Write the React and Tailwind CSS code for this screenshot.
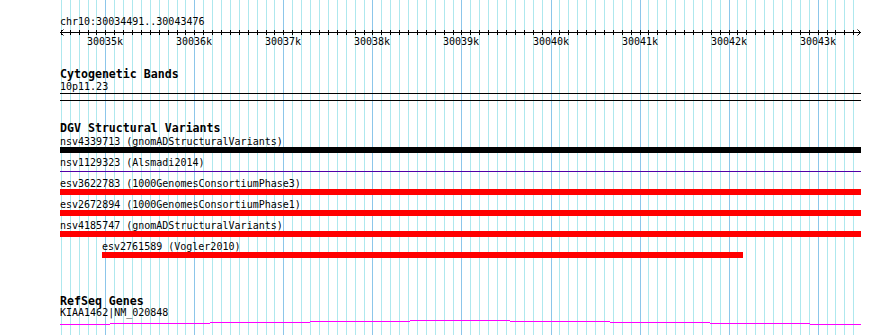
import React from "react";

const START = 30034491;
const END = 30043476;
const LEFT = 60;
const WIDTH = 800;
const xOf = (pos) => LEFT + ((pos - START) * WIDTH) / (END - START);

const gridPositions = [];
for (let p = 30034500; p <= END; p += 100) gridPositions.push(p);

function Grid() {
  return (
    <svg className="absolute left-0 top-0" width="890" height="335" shapeRendering="crispEdges">
      {gridPositions.map((p) => {
        const x = Math.round(xOf(p)) + 0.5;
        const major = p % 1000 === 0;
        return (
          <line key={p} x1={x} x2={x} y1={0} y2={335} stroke={major ? "#8cc6ea" : "#aee8ee"} strokeWidth="1" />
        );
      })}
    </svg>
  );
}

function Ruler() {
  const majors = [];
  for (let k = 35; k <= 43; k++) majors.push(k);
  return (
    <svg width="890" height="20" className="block" shapeRendering="crispEdges">
      <line x1={60} x2={861} y1={5.5} y2={5.5} stroke="#000" />
      <path d="M63.5 2.5 L60.5 5.5 L63.5 8.5" fill="none" stroke="#000" shapeRendering="auto" />
      <path d="M857.5 2.5 L860.5 5.5 L857.5 8.5" fill="none" stroke="#000" shapeRendering="auto" />
      {gridPositions.map((p) => {
        const x = Math.round(xOf(p)) + 0.5;
        return <line key={p} x1={x} x2={x} y1={3} y2={8} stroke="#000" />;
      })}
      {majors.map((k) => (
        <text
          key={k}
          x={Math.round(xOf(30000000 + k * 1000))}
          y={17.5}
          textAnchor="middle"
          fontFamily="'DejaVu Sans Mono', monospace"
          fontSize="10"
          fill="#000"
        >
          {`300${k}k`}
        </text>
      ))}
    </svg>
  );
}

const rows = [
  { label: "nsv4339713 (gnomADStructuralVariants)", kind: "bar", color: "bg-black" },
  { label: "nsv1129323 (Alsmadi2014)", kind: "line" },
  { label: "esv3622783 (1000GenomesConsortiumPhase3)", kind: "bar", color: "bg-[#ff0000]" },
  { label: "esv2672894 (1000GenomesConsortiumPhase1)", kind: "bar", color: "bg-[#ff0000]" },
  { label: "nsv4185747 (gnomADStructuralVariants)", kind: "bar", color: "bg-[#ff0000]" },
  { label: "esv2761589 (Vogler2010)", kind: "partial" },
];

function Row({ row }) {
  if (row.kind === "partial") {
    return (
      <div className="h-[21px] ml-[42px] w-[641px] flex flex-col">
        <div className="h-[10px] leading-[10px] text-[10px] whitespace-pre">{row.label}</div>
        <div className="h-[6px] bg-[#ff0000]" />
      </div>
    );
  }
  return (
    <div className="h-[21px] w-[801px] flex flex-col">
      <div className="h-[10px] leading-[10px] text-[10px] whitespace-pre">{row.label}</div>
      {row.kind === "bar" ? (
        <div className={`h-[6px] ${row.color}`} />
      ) : (
        <div className="h-[6px] flex flex-col justify-center">
          <div className="h-px bg-[#5000a8]" />
        </div>
      )}
    </div>
  );
}

function GeneLine() {
  const segs = [
    [60, 110, 324],
    [110, 210, 323],
    [210, 310, 322],
    [310, 410, 321],
    [410, 510, 320],
    [510, 610, 321],
    [610, 710, 322],
    [710, 810, 323],
    [810, 861, 324],
  ];
  return (
    <svg width="890" height="10" className="block" shapeRendering="crispEdges">
      {segs.map(([a, b, y], i) => (
        <line key={i} x1={a} x2={b} y1={y - 318 + 0.5} y2={y - 318 + 0.5} stroke="#ff00ff" strokeWidth="1" />
      ))}
    </svg>
  );
}

export default function App() {
  return (
    <div
      className="relative w-[890px] h-[335px] overflow-hidden bg-white text-black"
      style={{ fontFamily: "'DejaVu Sans Mono', monospace" }}
    >
      <Grid />
      <div className="relative flex flex-col">
        <div className="pt-[17px] pl-[60px] h-[27px] text-[10px] leading-[10px] whitespace-pre">
          chr10:30034491..30043476
        </div>
        <Ruler />
        <div className="pl-[60px] mt-[21px] h-[12px] text-[11.6px] leading-[12px] font-bold whitespace-pre">
          Cytogenetic Bands
        </div>
        <div className="pl-[60px] mt-[2px] h-[10px] text-[10px] leading-[10px] whitespace-pre">10p11.23</div>
        <div className="pl-[60px] mt-[1px]">
          <div className="w-[801px] h-px bg-black" />
          <div className="w-[801px] h-px bg-black mt-[6px]" />
        </div>
        <div className="pl-[60px] mt-[21px] h-[12px] text-[11.6px] leading-[12px] font-bold whitespace-pre">
          DGV Structural Variants
        </div>
        <div className="pl-[60px] mt-[3px] flex flex-col">
          {rows.map((r) => (
            <Row key={r.label} row={r} />
          ))}
        </div>
        <div className="pl-[60px] mt-[33px] h-[11px] text-[11.6px] leading-[11px] font-bold whitespace-pre">
          RefSeq Genes
        </div>
        <div className="pl-[60px] mt-[1px] h-[10px] text-[10px] leading-[10px] whitespace-pre">KIAA1462|NM_020848</div>
        <GeneLine />
      </div>
    </div>
  );
}
